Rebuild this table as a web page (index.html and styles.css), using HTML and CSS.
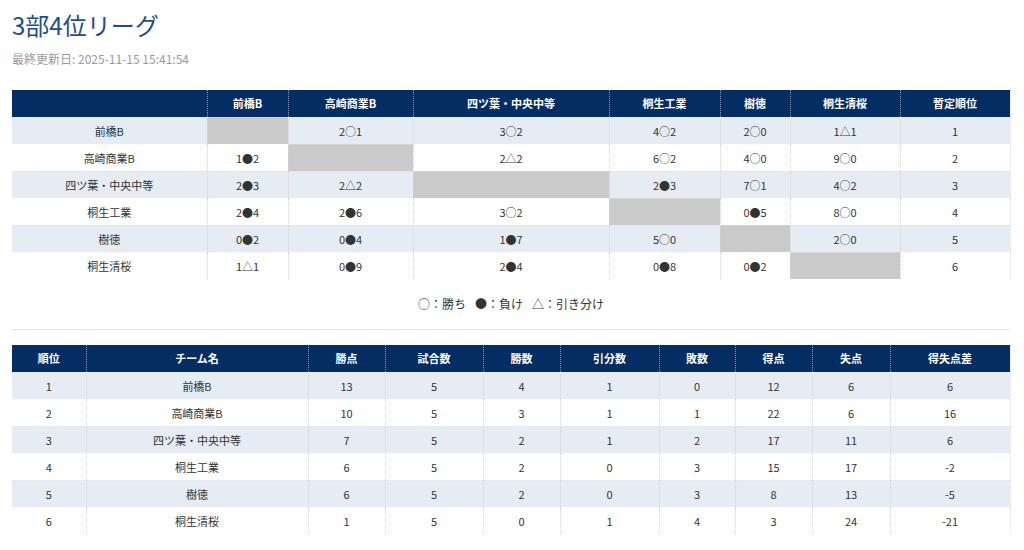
FILE: index.html
```html
<!DOCTYPE html>
<html lang="ja">
<head>
<meta charset="utf-8">
<title>3部4位リーグ</title>
<link rel="stylesheet" href="styles.css">
</head>
<body>
<div class="page">
  <h1 class="title">3部4位リーグ</h1>
  <p class="updated">最終更新日: 2025-11-15 15:41:54</p>

  <table class="grid matrix">
    <colgroup>
      <col class="m0"><col class="m1"><col class="m2"><col class="m3"><col class="m4"><col class="m5"><col class="m6"><col class="m7">
    </colgroup>
    <thead>
      <tr><th></th><th>前橋B</th><th>高崎商業B</th><th>四ツ葉・中央中等</th><th>桐生工業</th><th>樹徳</th><th>桐生清桜</th><th>暫定順位</th></tr>
    </thead>
    <tbody>
      <tr><td>前橋B</td><td class="self"></td><td>2○1</td><td>3○2</td><td>4○2</td><td>2○0</td><td>1△1</td><td>1</td></tr>
      <tr><td>高崎商業B</td><td>1●2</td><td class="self"></td><td>2△2</td><td>6○2</td><td>4○0</td><td>9○0</td><td>2</td></tr>
      <tr><td>四ツ葉・中央中等</td><td>2●3</td><td>2△2</td><td class="self"></td><td>2●3</td><td>7○1</td><td>4○2</td><td>3</td></tr>
      <tr><td>桐生工業</td><td>2●4</td><td>2●6</td><td>3○2</td><td class="self"></td><td>0●5</td><td>8○0</td><td>4</td></tr>
      <tr><td>樹徳</td><td>0●2</td><td>0●4</td><td>1●7</td><td>5○0</td><td class="self"></td><td>2○0</td><td>5</td></tr>
      <tr><td>桐生清桜</td><td>1△1</td><td>0●9</td><td>2●4</td><td>0●8</td><td>0●2</td><td class="self"></td><td>6</td></tr>
    </tbody>
  </table>

  <div class="legend">
    <span>○：勝ち</span>
    <span>●：負け</span>
    <span>△：引き分け</span>
  </div>

  <hr class="divider">

  <table class="grid standings">
    <colgroup>
      <col class="s0"><col class="s1"><col class="s2"><col class="s3"><col class="s4"><col class="s5"><col class="s6"><col class="s7"><col class="s8"><col class="s9">
    </colgroup>
    <thead>
      <tr><th>順位</th><th>チーム名</th><th>勝点</th><th>試合数</th><th>勝数</th><th>引分数</th><th>敗数</th><th>得点</th><th>失点</th><th>得失点差</th></tr>
    </thead>
    <tbody>
      <tr><td>1</td><td>前橋B</td><td>13</td><td>5</td><td>4</td><td>1</td><td>0</td><td>12</td><td>6</td><td>6</td></tr>
      <tr><td>2</td><td>高崎商業B</td><td>10</td><td>5</td><td>3</td><td>1</td><td>1</td><td>22</td><td>6</td><td>16</td></tr>
      <tr><td>3</td><td>四ツ葉・中央中等</td><td>7</td><td>5</td><td>2</td><td>1</td><td>2</td><td>17</td><td>11</td><td>6</td></tr>
      <tr><td>4</td><td>桐生工業</td><td>6</td><td>5</td><td>2</td><td>0</td><td>3</td><td>15</td><td>17</td><td>-2</td></tr>
      <tr><td>5</td><td>樹徳</td><td>6</td><td>5</td><td>2</td><td>0</td><td>3</td><td>8</td><td>13</td><td>-5</td></tr>
      <tr><td>6</td><td>桐生清桜</td><td>1</td><td>5</td><td>0</td><td>1</td><td>4</td><td>3</td><td>24</td><td>-21</td></tr>
    </tbody>
  </table>
</div>
</body>
</html>
```

FILE: styles.css
```css
* { box-sizing: border-box; }

html, body {
  margin: 0;
  padding: 0;
  background: #ffffff;
}

body {
  font-family: "Noto Sans CJK JP", "Noto Sans", sans-serif;
  color: #333333;
}

.page {
  padding: 10px 14px 0 12px;
}

.title {
  margin: 0;
  font-size: 24px;
  line-height: 30px;
  font-weight: 400;
  color: #1c4d8c;
}

.updated {
  margin: 10px 0 0;
  font-size: 12px;
  line-height: 18px;
  color: #9a9a9a;
}

.grid {
  width: 998px;
  border-collapse: collapse;
  table-layout: fixed;
  font-size: 11px;
}

.matrix { margin-top: 22px; }

.grid th,
.grid td {
  height: 27px;
  padding: 0 4px;
  text-align: center;
  vertical-align: middle;
  line-height: 16px;
  white-space: nowrap;
}

.grid th {
  background: #032d63;
  color: #ffffff;
  font-weight: 700;
  border-left: 1px dotted rgba(255, 255, 255, 0.55);
  border-bottom: 1px dotted rgba(255, 255, 255, 0.3);
}

.grid th:first-child { border-left: none; }

.grid td {
  border-left: 1px dotted #d4d4d4;
  color: #333333;
}

.grid td:first-child { border-left: none; }

.grid th:last-child,
.grid td:last-child { border-right: 1px dotted #dcdcdc; }

.grid tbody tr:nth-child(odd) td { background: #e6ecf3; }
.grid tbody tr:nth-child(even) td { background: #ffffff; }

.grid tbody tr td { border-top: 1px dotted rgba(0, 0, 0, 0.03); }

.grid tbody tr td.self {
  background: #cacaca;
  border-top-color: rgba(255, 255, 255, 0.35);
}

.m0 { width: 195px; }
.m1 { width: 81px; }
.m2 { width: 125px; }
.m3 { width: 196px; }
.m4 { width: 111px; }
.m5 { width: 70px; }
.m6 { width: 110px; }
.m7 { width: 110px; }

.s0 { width: 74px; }
.s1 { width: 222px; }
.s2 { width: 77px; }
.s3 { width: 98px; }
.s4 { width: 77px; }
.s5 { width: 99px; }
.s6 { width: 76px; }
.s7 { width: 77px; }
.s8 { width: 78px; }
.s9 { width: 120px; }

.legend {
  width: 998px;
  margin-top: 16px;
  display: flex;
  justify-content: center;
  gap: 9px;
  font-size: 12px;
  line-height: 18px;
  color: #333333;
}

.divider {
  width: 998px;
  margin: 16px 0 0;
  border: none;
  border-top: 1px solid #e3e3e3;
  height: 0;
}

.standings { margin-top: 15px; }
```
